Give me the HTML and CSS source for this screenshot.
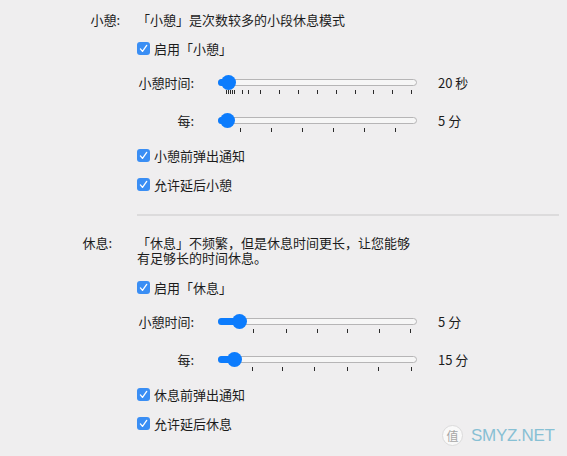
FILE: index.html
```html
<!DOCTYPE html>
<html lang="zh-CN">
<head>
<meta charset="utf-8">
<title>休息设置</title>
<link rel="stylesheet" href="styles.css">
</head>
<body>
<div class="page">
  <section class="section section-short">
    <div class="sec-label">小憩:</div>
    <div class="sec-body">
      <div class="desc">「小憩」是次数较多的小段休息模式</div>
      <label class="check gap-desc"><span class="box"><svg viewBox="0 0 13 13" width="13" height="13"><path d="M3.4 6.9 L5.5 9.4 L9.7 3.4" fill="none" stroke="#fff" stroke-width="1.3" stroke-linecap="round" stroke-linejoin="round"/></svg></span>启用「小憩」</label>
      <div class="srow gap-cs">
        <div class="slabel">小憩时间:</div>
        <div class="slider">
          <div class="track"><div class="fill" style="width:11px"></div><div class="thumb" style="left:1.5px"></div></div>
          <div class="ticks">
            <i style="left:8px"></i><i style="left:10px"></i><i style="left:12px"></i><i style="left:14px"></i><i style="left:16px"></i><i style="left:24px"></i><i style="left:30px"></i><i style="left:42px"></i><i style="left:61px"></i><i style="left:80px"></i><i style="left:99px"></i><i style="left:118px"></i><i style="left:137px"></i><i style="left:155px"></i><i style="left:174px"></i><i style="left:193px"></i>
          </div>
        </div>
        <div class="sval">20 秒</div>
      </div>
      <div class="srow gap-ss">
        <div class="slabel">每:</div>
        <div class="slider">
          <div class="track"><div class="fill" style="width:10px"></div><div class="thumb" style="left:0.5px"></div></div>
          <div class="ticks">
            <i style="left:22px"></i><i style="left:53px"></i><i style="left:84px"></i><i style="left:115px"></i><i style="left:146px"></i><i style="left:177px"></i>
          </div>
        </div>
        <div class="sval">5 分</div>
      </div>
      <label class="check gap-sc"><span class="box"><svg viewBox="0 0 13 13" width="13" height="13"><path d="M3.4 6.9 L5.5 9.4 L9.7 3.4" fill="none" stroke="#fff" stroke-width="1.3" stroke-linecap="round" stroke-linejoin="round"/></svg></span>小憩前弹出通知</label>
      <label class="check gap-cc"><span class="box"><svg viewBox="0 0 13 13" width="13" height="13"><path d="M3.4 6.9 L5.5 9.4 L9.7 3.4" fill="none" stroke="#fff" stroke-width="1.3" stroke-linecap="round" stroke-linejoin="round"/></svg></span>允许延后小憩</label>
    </div>
  </section>

  <div class="divider"></div>

  <section class="section section-long">
    <div class="sec-label">休息:</div>
    <div class="sec-body">
      <div class="desc">「休息」不频繁，但是休息时间更长，让您能够<br>有足够长的时间休息。</div>
      <label class="check gap-desc2"><span class="box"><svg viewBox="0 0 13 13" width="13" height="13"><path d="M3.4 6.9 L5.5 9.4 L9.7 3.4" fill="none" stroke="#fff" stroke-width="1.3" stroke-linecap="round" stroke-linejoin="round"/></svg></span>启用「休息」</label>
      <div class="srow gap-cs">
        <div class="slabel">小憩时间:</div>
        <div class="slider">
          <div class="track"><div class="fill" style="width:22px"></div><div class="thumb" style="left:12.5px"></div></div>
          <div class="ticks">
            <i style="left:35px"></i><i style="left:68px"></i><i style="left:99px"></i><i style="left:129px"></i><i style="left:161px"></i><i style="left:192px"></i>
          </div>
        </div>
        <div class="sval">5 分</div>
      </div>
      <div class="srow gap-ss">
        <div class="slabel">每:</div>
        <div class="slider">
          <div class="track"><div class="fill" style="width:17px"></div><div class="thumb" style="left:7.5px"></div></div>
          <div class="ticks">
            <i style="left:34px"></i><i style="left:64px"></i><i style="left:96px"></i><i style="left:129px"></i><i style="left:160px"></i><i style="left:193px"></i>
          </div>
        </div>
        <div class="sval">15 分</div>
      </div>
      <label class="check gap-sc"><span class="box"><svg viewBox="0 0 13 13" width="13" height="13"><path d="M3.4 6.9 L5.5 9.4 L9.7 3.4" fill="none" stroke="#fff" stroke-width="1.3" stroke-linecap="round" stroke-linejoin="round"/></svg></span>休息前弹出通知</label>
      <label class="check gap-cc"><span class="box"><svg viewBox="0 0 13 13" width="13" height="13"><path d="M3.4 6.9 L5.5 9.4 L9.7 3.4" fill="none" stroke="#fff" stroke-width="1.3" stroke-linecap="round" stroke-linejoin="round"/></svg></span>允许延后休息</label>
    </div>
  </section>

  <div class="watermark"><span class="wm-circle">值</span><span class="wm-text">SMYZ.NET</span></div>
</div>
</body>
</html>
```
FILE: styles.css
```css
html, body {
  margin: 0;
  padding: 0;
}
body {
  background: #efeeef;
  color: #1c1c1c;
  font-family: "Noto Sans CJK SC", "Noto Sans", sans-serif;
  font-size: 13px;
  line-height: 15px;
}
.page {
  position: relative;
  width: 567px;
  height: 456px;
  padding-top: 12px;
  box-sizing: border-box;
  overflow: hidden;
}
.section {
  display: grid;
  grid-template-columns: 137px 1fr;
}
.sec-label {
  text-align: right;
  white-space: nowrap;
}
.section-short .sec-label { padding-right: 17px; }
.section-long .sec-label { padding-right: 25px; }
.section-long { padding-top: 19px; }
.sec-body {
  display: flex;
  flex-direction: column;
  align-items: flex-start;
}
.desc {
  white-space: nowrap;
}
.check {
  display: flex;
  align-items: center;
  height: 15px;
  white-space: nowrap;
}
.box {
  width: 13px;
  height: 13px;
  border-radius: 3px;
  background: #3a8ef4;
  margin-right: 4px;
  display: flex;
}
.box svg { display: block; }
.gap-desc { margin-top: 14px; }
.gap-desc2 { margin-top: 15px; }
.gap-cs { margin-top: 18px; }
.gap-ss { margin-top: 18px; }
.gap-sc { margin-top: 16px; }
.gap-cc { margin-top: 14px; }

.srow {
  display: flex;
  align-items: flex-start;
}
.slabel {
  width: 57px;
  text-align: right;
  line-height: 17px;
  white-space: nowrap;
  margin-right: 24px;
}
.slider {
  position: relative;
  width: 199px;
  padding-top: 5px;
}
.track {
  position: relative;
  height: 7px;
  box-sizing: border-box;
  border: 1px solid #b6b5b6;
  border-radius: 4px;
  background: #f6f6f6;
}
.fill {
  position: absolute;
  left: -1px;
  top: -1px;
  height: 7px;
  border-radius: 4px 0 0 4px;
  background: #0c7cfd;
}
.thumb {
  position: absolute;
  top: -5px;
  width: 15px;
  height: 15px;
  border-radius: 50%;
  background: #0c7cfd;
}
.ticks {
  position: relative;
  height: 4px;
  margin-top: 4px;
}
.ticks i {
  position: absolute;
  top: 0;
  width: 1px;
  height: 4px;
  background: #2a2a2a;
}
.sval {
  margin-left: 21px;
  line-height: 17px;
  white-space: nowrap;
}
.divider {
  height: 2px;
  background: #dcdbdc;
  margin: 22px 8px 0 137px;
}
.watermark {
  position: absolute;
  left: 442px;
  top: 425px;
  display: flex;
  align-items: center;
  opacity: 0.85;
}
.wm-circle {
  width: 19px;
  height: 19px;
  border-radius: 50%;
  background: #fbfbfb;
  border: 1px solid #d8d8d8;
  color: #9a9a9a;
  font-size: 12px;
  line-height: 19px;
  text-align: center;
  margin-right: 8px;
}
.wm-text {
  font-family: "Liberation Sans", Arial, sans-serif;
  font-size: 17px;
  line-height: 20px;
  color: #76b8d0;
  letter-spacing: -0.3px;
}
```
